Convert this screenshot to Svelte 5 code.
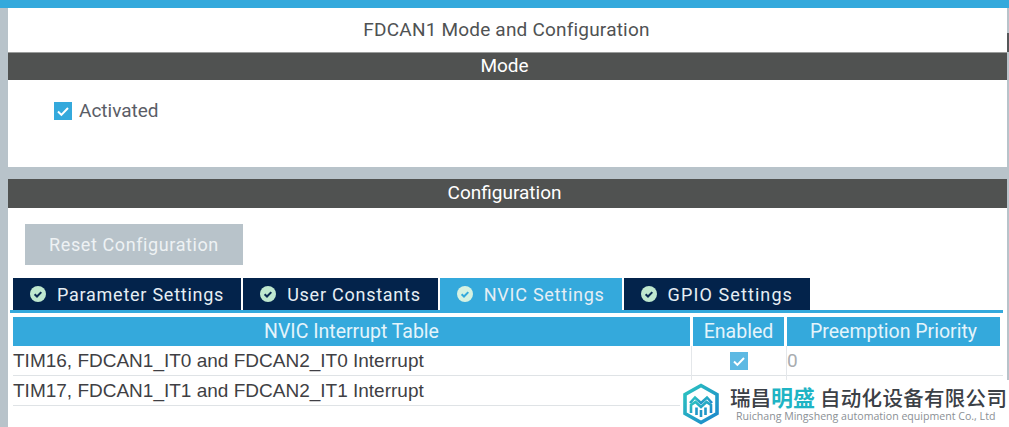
<script>
  const tabs = [
    { label: "Parameter Settings", active: false },
    { label: "User Constants", active: false },
    { label: "NVIC Settings", active: true },
    { label: "GPIO Settings", active: false }
  ];

  const rows = [
    { name: "TIM16, FDCAN1_IT0 and FDCAN2_IT0 Interrupt", enabled: true, priority: "0" },
    { name: "TIM17, FDCAN1_IT1 and FDCAN2_IT1 Interrupt", enabled: false, priority: "" }
  ];
</script>

<div class="page">
  <div class="topline"></div>
  <div class="content">
    <section class="mode">
      <h1>FDCAN1 Mode and Configuration</h1>
      <h2>Mode</h2>
      <label class="activated">
        <span class="check">
          <svg viewBox="0 0 18 18" width="18" height="18"><path d="M4 9.5l3.4 3.4L14 6" fill="none" stroke="#fff" stroke-width="2" /></svg>
        </span>
        Activated
      </label>
    </section>

    <section class="config">
      <h2>Configuration</h2>
      <button class="reset">Reset Configuration</button>

      <div class="tabs">
        {#each tabs as tab}
          <div class="tab" class:active={tab.active}>
            <svg viewBox="0 0 16 16" width="16" height="16">
              <circle cx="8" cy="8" r="8" fill={tab.active ? "#d6f2e2" : "#bfe8cf"} />
              <path d="M4.6 8.2l2.4 2.3 4.3-4.4" fill="none" stroke={tab.active ? "#34a9dc" : "#0b2a52"} stroke-width="2" />
            </svg>
            {tab.label}
          </div>
        {/each}
      </div>

      <div class="table">
        <div class="thead">
          <div class="th name">NVIC Interrupt Table</div>
          <div class="th enabled">Enabled</div>
          <div class="th prio">Preemption Priority</div>
        </div>
        {#each rows as row}
          <div class="tr">
            <div class="td name">{row.name}</div>
            <div class="td enabled">
              {#if row.enabled}
                <span class="check faded">
                  <svg viewBox="0 0 18 18" width="18" height="18"><path d="M4 9.5l3.4 3.4L14 6" fill="none" stroke="#fff" stroke-width="2" /></svg>
                </span>
              {/if}
            </div>
            <div class="td prio">{row.priority}</div>
          </div>
        {/each}
      </div>
    </section>
  </div>

  <div class="thumb"></div>

  <div class="logo">
    <svg viewBox="0 0 38 42" width="38" height="42">
      <defs>
        <linearGradient id="lg" x1="0" y1="0" x2="1" y2="1">
          <stop offset="0" stop-color="#2cc4bf" />
          <stop offset="1" stop-color="#1c86cc" />
        </linearGradient>
      </defs>
      <path d="M19 2.5L35 11.5V30.5L19 39.5L3 30.5V11.5Z" fill="none" stroke="url(#lg)" stroke-width="3.6" />
      <path d="M8 20L13 14.5L19 20L25 14.5L30 20" fill="none" stroke="url(#lg)" stroke-width="2.6" />
      <path d="M9 30V22L13.5 19L19 24L24.5 19L29 22V30" fill="none" stroke="url(#lg)" stroke-width="2.6" />
      <path d="M14.5 32V24.5M23.5 32V24.5M19 34V27" fill="none" stroke="#1f97c9" stroke-width="2.6" />
    </svg>
    <div class="logo-text">
      <div class="cn">瑞昌<span class="teal">明盛</span><span class="rest">自动化设备有限公司</span></div>
      <div class="en">Ruichang Mingsheng automation equipment Co., Ltd</div>
    </div>
  </div>
</div>

<style>
  :global(body) {
    margin: 0;
    background: #b8c3ca;
  }

  .page {
    position: relative;
    width: 1009px;
    height: 427px;
    overflow: hidden;
    background: #b8c3ca;
    font-family: Roboto, "Liberation Sans", sans-serif;
  }

  .topline {
    height: 8px;
    background: #34a9dc;
  }

  .content {
    margin: 0 2px 0 8px;
    display: flex;
    flex-direction: column;
    gap: 12px;
  }

  section {
    background: #fff;
  }

  .mode {
    height: 159px;
  }

  .config {
    height: 248px;
  }

  h1 {
    margin: 0;
    height: 44px;
    line-height: 44px;
    padding-right: 2px;
    text-align: center;
    font-size: 19px;
    font-weight: 400;
    letter-spacing: 0.2px;
    color: #4f5253;
  }

  h2 {
    margin: 0;
    height: 28px;
    line-height: 26px;
    padding-right: 6px;
    text-align: center;
    font-size: 19px;
    font-weight: 400;
    color: #fff;
    background: #505251;
    border-top: 1px solid #9a9c9b;
    box-sizing: border-box;
  }

  .config h2 {
    height: 29px;
    line-height: 28px;
    border-top: 0;
  }

  .activated {
    display: flex;
    align-items: center;
    gap: 7px;
    margin: 19px 0 0 46px;
    font-size: 19px;
    color: #5a5d66;
  }

  .activated .check {
    margin-top: 1px;
  }

  .check {
    display: block;
    width: 18px;
    height: 18px;
    background: #34a9dc;
  }

  .check.faded {
    background: #5db9e3;
  }

  .check svg {
    display: block;
  }

  .reset {
    display: block;
    width: 218px;
    height: 41px;
    margin: 16px 0 0 17px;
    padding: 0;
    border: 0;
    background: #b8c3ca;
    color: #eef2f4;
    font-family: inherit;
    font-size: 18px;
    letter-spacing: 0.6px;
  }

  .tabs {
    display: flex;
    gap: 2px;
    margin: 13px 0 0 5px;
    height: 32px;
  }

  .tab {
    display: flex;
    align-items: center;
    gap: 11px;
    height: 32px;
    padding: 0 17px;
    background: #03234b;
    color: #e6eef4;
    font-size: 18px;
    letter-spacing: 0.75px;
    white-space: nowrap;
  }

  .tab:last-child {
    letter-spacing: 1.1px;
  }

  .tab.active {
    background: #34a9dc;
  }

  .table {
    margin-left: 2px;
    border-top: 3px solid #34a9dc;
    padding: 4px 0 0 3px;
    width: 993px;
    box-sizing: border-box;
  }

  .thead,
  .tr {
    display: grid;
    grid-template-columns: 680px 94px 216px;
  }

  .thead {
    height: 29px;
  }

  .th {
    background: #34a9dc;
    color: #e4f4fb;
    font-size: 19.5px;
    line-height: 29px;
    text-align: center;
    margin-right: 3px;
  }

  .tr {
    height: 30px;
    border-bottom: 1px solid #dfe3e6;
    box-sizing: border-box;
  }

  .tr:first-of-type {
    height: 31px;
  }

  .td.name {
    font-family: "Liberation Sans", Arial, sans-serif;
    font-size: 19px;
    line-height: 30px;
    color: #3f3f44;
    white-space: nowrap;
  }

  .td.enabled {
    display: flex;
    align-items: center;
    justify-content: center;
    margin-left: -2px;
    border-left: 1px solid #e4e7ea;
    border-right: 1px solid #e4e7ea;
  }

  .td.prio {
    font-size: 19px;
    line-height: 30px;
    color: #a9adb0;
  }

  .thumb {
    position: absolute;
    top: 33px;
    right: 0;
    width: 2px;
    height: 19px;
    background: #55585a;
  }

  .logo {
    position: absolute;
    right: 0;
    bottom: 0;
    width: 329px;
    height: 47px;
    background: #fff;
    display: flex;
    align-items: center;
    gap: 10px;
    padding-left: 2px;
    box-sizing: border-box;
  }

  .logo-text {
    display: flex;
    flex-direction: column;
  }

  .cn {
    font-family: "Noto Sans CJK SC", sans-serif;
    font-size: 20.5px;
    line-height: 24px;
    font-weight: 500;
    color: #3b4046;
    white-space: nowrap;
  }

  .teal {
    font-size: 22px;
    color: #1fb4c4;
    font-weight: 700;
    margin: 0 5px 0 0;
  }

  .rest {
    letter-spacing: 0.3px;
  }

  .en {
    font-family: "Open Sans", sans-serif;
    font-size: 10.6px;
    line-height: 13px;
    margin-top: 1px;
    color: #8b9095;
    padding-left: 6px;
    white-space: nowrap;
  }
</style>
